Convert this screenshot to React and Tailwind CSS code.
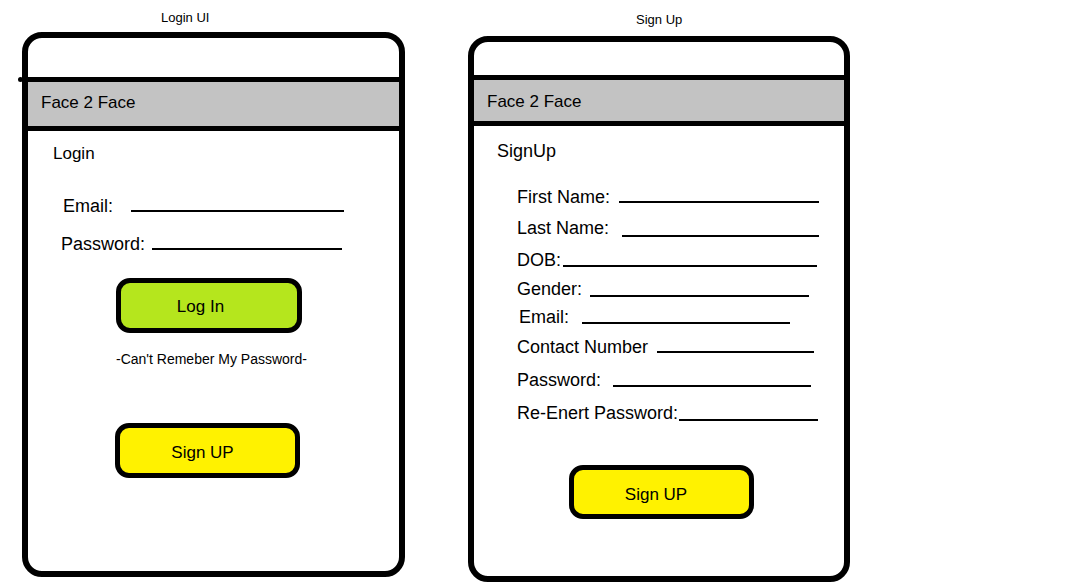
import React from 'react';

function Field({ label, className = '', pad, labelW, lineW, drop = '' }) {
  return (
    <div className={`flex items-baseline text-[18px] leading-[22px] ${pad} ${className}`}>
      <span className={`whitespace-nowrap shrink-0 ${labelW}`}>{label}</span>
      <div className={`h-[2px] bg-black shrink-0 ${lineW} ${drop}`} />
    </div>
  );
}

function Button({ children, className = '', textPad = '' }) {
  return (
    <div
      className={`flex items-center justify-center border-[5px] border-black rounded-[14px] text-[17px] leading-[20px] ${className}`}
    >
      <span className={textPad}>{children}</span>
    </div>
  );
}

function Header({ top, pad, nub = false }) {
  return (
    <>
      <div className={top} />
      <div className={`relative border-y-[5px] border-black bg-[#c3c3c3] pl-[13px] text-[17px] leading-[20px] ${pad}`}>
        {/* little overshoot of the hand-drawn divider */}
        {nub && <span className="absolute -top-[5px] -left-[10px] w-[5px] h-[5px] rounded-full bg-black" />}
        Face 2 Face
      </div>
    </>
  );
}

function LoginPhone() {
  return (
    <div className="flex flex-col w-[383px]">
      <div className="h-[32px] pt-[10px] pl-[139px] text-[13px] leading-[16px]">Login UI</div>
      <div className="relative w-[383px] h-[545px] border-[6px] border-black rounded-[20px]">
        <Header top="h-[39px]" pad="h-[54px] pt-[11px]" nub />
        <div className="pl-[25px] pt-[13px] text-[17px] leading-[20px]">Login</div>
        <Field className="mt-[31px]" pad="pl-[35px]" labelW="w-[68px]" lineW="w-[213px]" label="Email:" />
        <Field className="mt-[16px]" pad="pl-[33px]" labelW="w-[91px]" lineW="w-[190px]" label="Password:" />
        <Button className="ml-[88px] mt-[23px] w-[186px] h-[55px] bg-[#b5e61d]" textPad="pr-[17px] pt-[3px]">
          Log In
        </Button>
        <div className="ml-[88px] mt-[16px] w-[186px] text-center text-[14px] leading-[20px] whitespace-nowrap">
          -Can't Remeber My Password-
        </div>
        <Button className="ml-[87px] mt-[54px] w-[185px] h-[55px] bg-[#fff200]" textPad="pr-[10px] pt-[5px]">
          Sign UP
        </Button>
      </div>
    </div>
  );
}

function SignUpPhone() {
  return (
    <div className="flex flex-col w-[382px]">
      <div className="h-[36px] pt-[12px] pl-[168px] text-[13px] leading-[16px]">Sign Up</div>
      <div className="w-[382px] h-[546px] border-[6px] border-black rounded-[20px] overflow-hidden">
        <Header top="h-[33px]" pad="h-[51px] pt-[12px]" />
        <div className="pl-[23px] pt-[14px] text-[18px] leading-[22px]">SignUp</div>
        <Field className="mt-[24px]" pad="pl-[43px]" labelW="w-[102px]" lineW="w-[200px]" label="First Name:" />
        <Field className="mt-[9px]" pad="pl-[43px]" labelW="w-[105px]" lineW="w-[197px]" drop="translate-y-[3px]" label="Last Name:" />
        <Field className="mt-[10px]" pad="pl-[43px]" labelW="w-[46px]" lineW="w-[254px]" drop="translate-y-[1px]" label="DOB:" />
        <Field className="mt-[7px]" pad="pl-[43px]" labelW="w-[73px]" lineW="w-[219px]" drop="translate-y-[2px]" label="Gender:" />
        <Field className="mt-[6px]" pad="pl-[45px]" labelW="w-[63px]" lineW="w-[208px]" drop="translate-y-[1px]" label="Email:" />
        <Field className="mt-[8px]" pad="pl-[43px]" labelW="w-[140px]" lineW="w-[157px]" label="Contact Number" />
        <Field className="mt-[11px]" pad="pl-[43px]" labelW="w-[96px]" lineW="w-[198px]" drop="translate-y-[1px]" label="Password:" />
        <Field className="mt-[11px]" pad="pl-[43px]" labelW="w-[162px]" lineW="w-[139px]" drop="translate-y-[2px]" label="Re-Enert Password:" />
        <Button className="ml-[95px] mt-[41px] w-[185px] h-[54px] bg-[#fff200]" textPad="pr-[11px] pt-[5px]">
          Sign UP
        </Button>
      </div>
    </div>
  );
}

export default function App() {
  return (
    <div className="flex gap-[63px] pl-[22px] w-full h-screen bg-white text-black overflow-hidden font-['Liberation_Sans',sans-serif]">
      <LoginPhone />
      <SignUpPhone />
    </div>
  );
}
